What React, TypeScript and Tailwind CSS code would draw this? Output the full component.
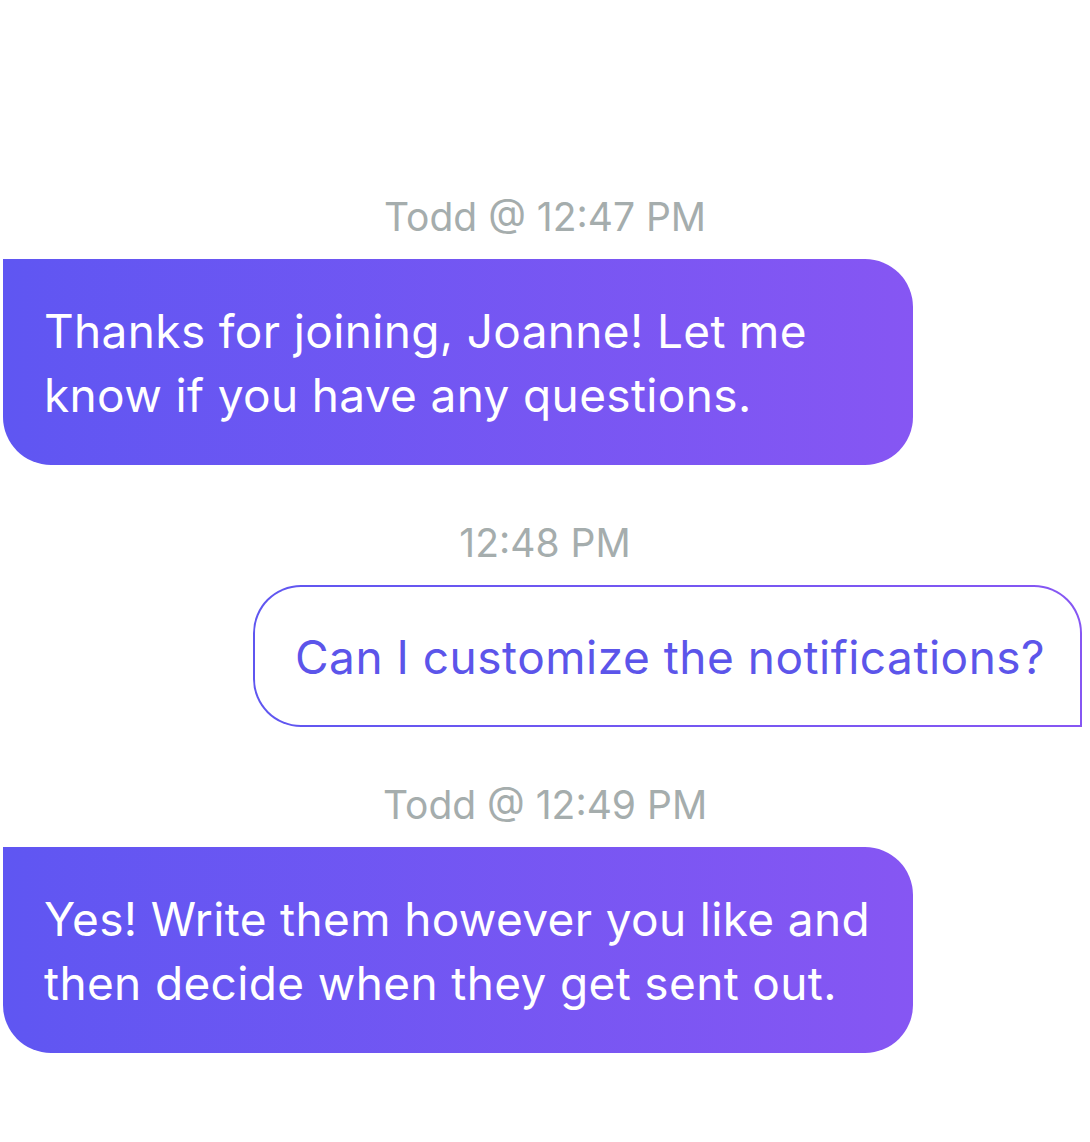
import React from "react";

const font = { fontFamily: "Inter, 'Noto Sans', sans-serif" };

function Stamp({ children }: { children: React.ReactNode }) {
  return (
    <div className="text-center text-[39px] leading-[44px] text-[#a5adad]" style={font}>
      {children}
    </div>
  );
}

export default function App() {
  return (
    <div className="w-[1090px] h-[1142px] bg-white pt-[195px]" style={font}>
      <Stamp>Todd @ 12:47 PM</Stamp>
      <div className="mt-[20px] ml-[3px] w-[910px] rounded-[48px] rounded-tl-none bg-gradient-to-r from-[#5f56f2] to-[#8656f3] pl-[41px] pr-[30px] pt-[40px] pb-[38px] text-[46px] leading-[64px] tracking-[0.35px] text-white">
        Thanks for joining, Joanne! Let me
        <br />
        know if you have any questions.
      </div>

      <div className="mt-[56px]">
        <Stamp>12:48 PM</Stamp>
      </div>
      <div className="mt-[20px] ml-auto mr-[8px] w-[829px] rounded-[48px] rounded-br-none bg-gradient-to-r from-[#5f56f0] to-[#8656f3] p-[2px]">
        <div className="rounded-[46px] rounded-br-none bg-white pl-[40px] pr-[20px] pt-[38px] pb-[36px] text-[46px] leading-[64px] tracking-[0.5px] text-[#5c55ea] whitespace-nowrap">
          Can I customize the notifications?
        </div>
      </div>

      <div className="mt-[56px]">
        <Stamp>Todd @ 12:49 PM</Stamp>
      </div>
      <div className="mt-[20px] ml-[3px] w-[910px] rounded-[48px] rounded-tl-none bg-gradient-to-r from-[#5f56f2] to-[#8656f3] pl-[41px] pr-[30px] pt-[40px] pb-[38px] text-[46px] leading-[64px] tracking-[0.35px] text-white">
        Yes! Write them however you like and
        <br />
        then decide when they get sent out.
      </div>
    </div>
  );
}
